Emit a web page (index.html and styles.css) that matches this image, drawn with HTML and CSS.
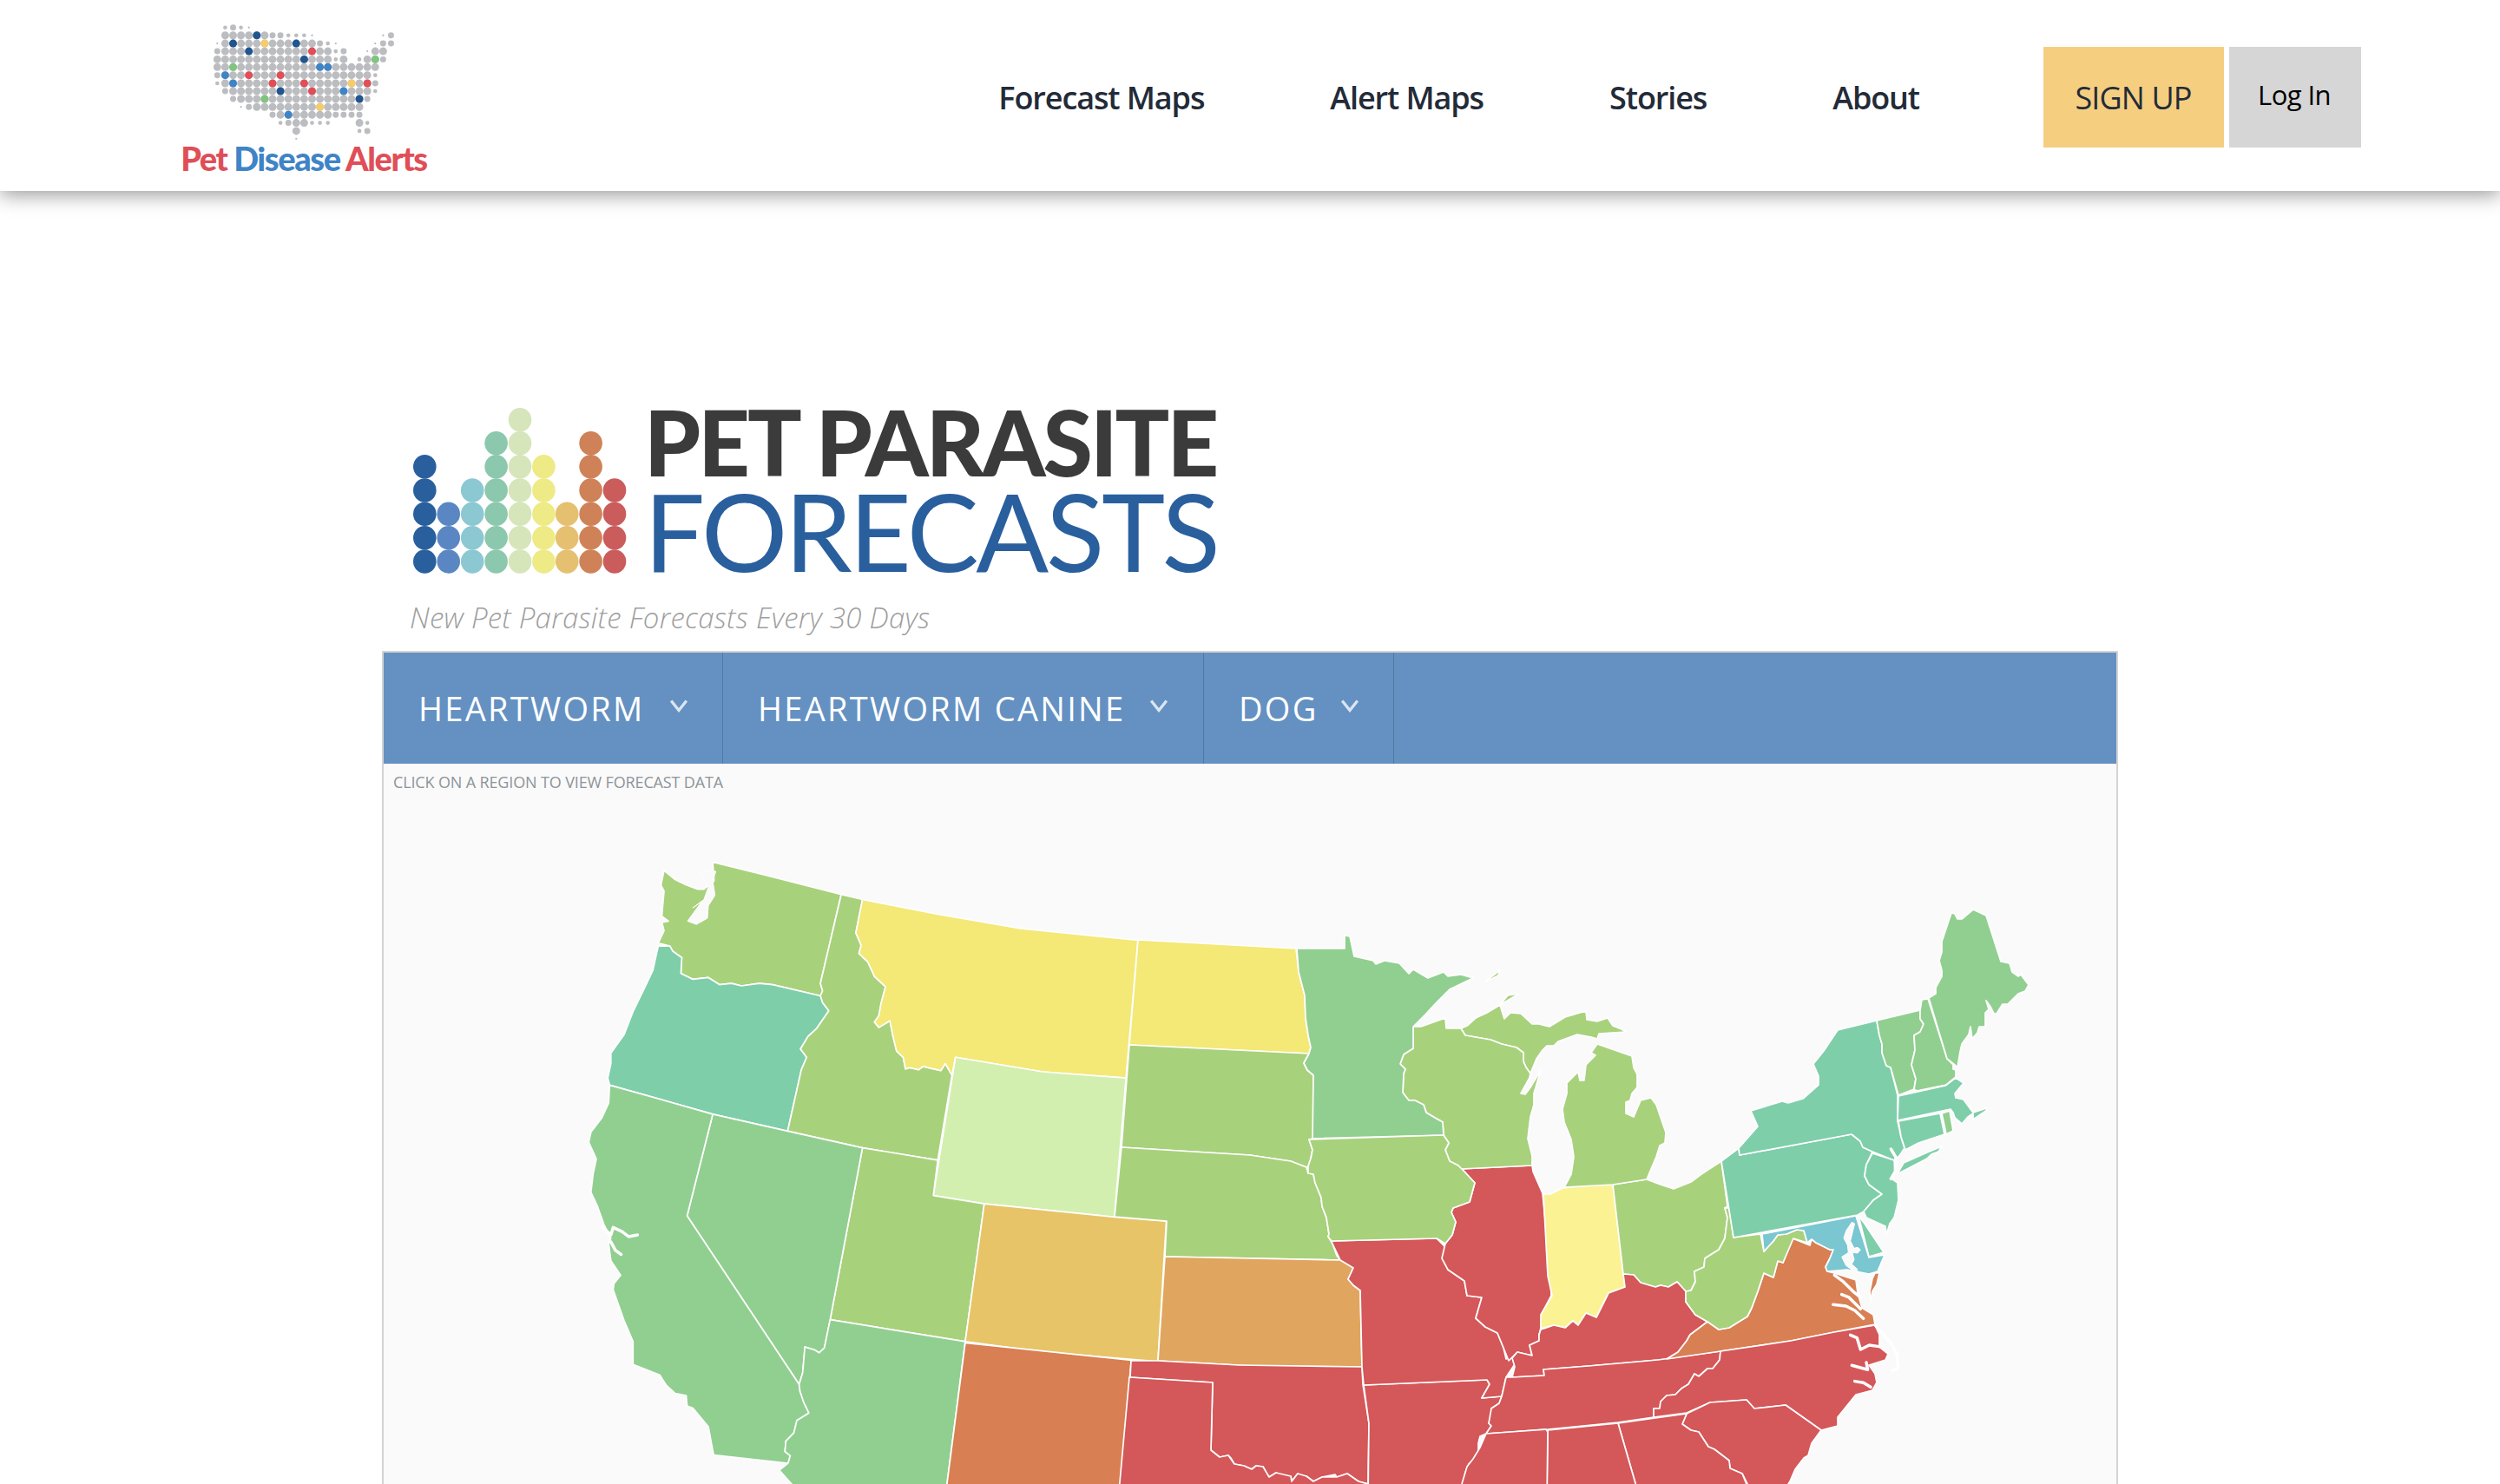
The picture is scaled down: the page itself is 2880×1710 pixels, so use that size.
FILE: index.html
```html
<!DOCTYPE html>
<html lang="en">
<head>
<meta charset="utf-8">
<title>Pet Parasite Forecasts</title>
<link rel="stylesheet" href="styles.css">
</head>
<body>
<div class="page">
<header class="site-header">
  <a class="brand">
    <svg class="brand-map" viewBox="200 80 628 405" aria-hidden="true">
      <g class="dots">
        <path class="s" d="M240.3 94h1M295 94h1"/><path class="m" d="M267.7 94h1"/><path class="t" d="M322.3 94h1"/>
        <path class="l" d="M240.3 121H378"/><path class="m" d="M404.3 121H433"/><path class="s" d="M459 121H515"/><path class="t" d="M541 121h1M787 121h1"/><path class="m" d="M814.3 121h1"/>
        <path class="t" d="M213 149h1M623 149h1M759.7 149h1"/><path class="l" d="M240.3 149H542"/><path class="m" d="M568.3 149h1M787 149H815.5"/><path class="s" d="M595.7 149h1"/>
        <path class="m" d="M213 176h1M650.3 176h1"/><path class="l" d="M240.3 176H597M759.7 176H788"/><path class="s" d="M623 176h1"/><path class="t" d="M732.3 176h1"/>
        <path class="l" d="M213 204H597M650.3 204h1M732.3 204H761"/><path class="s" d="M623 204h1M705 204h1"/><path class="m" d="M787 204h1"/>
        <path class="l" d="M213 231H761"/>
        <path class="m" d="M213 259h1"/><path class="l" d="M240.3 259H733.5"/><path class="s" d="M759.7 259h1"/>
        <path class="s" d="M213 287h1"/><path class="l" d="M240.3 287H733.5"/><path class="m" d="M759.7 287h1"/>
        <path class="m" d="M240.3 314h1"/><path class="l" d="M267.7 314H733.5"/><path class="s" d="M759.7 314h1"/>
        <path class="m" d="M267.7 341h1M732.3 341h1"/><path class="l" d="M295 341H706"/>
        <path class="t" d="M295 369h1"/><path class="m" d="M322.3 369h1"/><path class="l" d="M349.7 369H706"/>
        <path class="m" d="M404.3 396h1M623 396H706"/><path class="l" d="M431.7 396H597"/>
        <path class="s" d="M431.7 424h1M541 424H597M732.3 424h1"/><path class="m" d="M459 424h1"/><path class="l" d="M486.3 424H515M705 424h1"/>
        <path class="l" d="M486.3 452h1"/><path class="s" d="M705 452h1"/><path class="m" d="M732.3 452h1"/>
        <path class="t" d="M486.3 479h1"/>
      </g>
      <g class="pin-dark"><circle cx="349.7" cy="121" r="13.5"/><circle cx="267.7" cy="149" r="13.5"/><circle cx="486.3" cy="149" r="13.5"/><circle cx="322.3" cy="176" r="13.5"/><circle cx="513.7" cy="204" r="13.5"/><circle cx="431.7" cy="314" r="13.5"/><circle cx="705" cy="341" r="13.5"/></g>
      <g class="pin-yellow"><circle cx="377" cy="149" r="13.5"/><circle cx="677.7" cy="287" r="13.5"/><circle cx="568.3" cy="369" r="13.5"/></g>
      <g class="pin-red"><circle cx="541" cy="176" r="13.5"/><circle cx="322.3" cy="259" r="13.5"/><circle cx="431.7" cy="259" r="13.5"/><circle cx="404.3" cy="287" r="13.5"/><circle cx="513.7" cy="287" r="13.5"/><circle cx="732.3" cy="287" r="13.5"/><circle cx="541" cy="314" r="13.5"/></g>
      <g class="pin-blue"><circle cx="568.3" cy="231" r="13.5"/><circle cx="595.7" cy="231" r="13.5"/><circle cx="240.3" cy="259" r="13.5"/><circle cx="267.7" cy="287" r="13.5"/><circle cx="650.3" cy="314" r="13.5"/><circle cx="459" cy="396" r="13.5"/></g>
      <g class="pin-green"><circle cx="759.7" cy="204" r="13.5"/><circle cx="267.7" cy="231" r="13.5"/><circle cx="377" cy="341" r="13.5"/></g>
    </svg>
    <span class="brand-name"><span class="b-red">Pet</span> <span class="b-blue">Disease</span> <span class="b-red">Alerts</span></span>
  </a>
  <nav class="main-nav">
    <a>Forecast Maps</a>
    <a>Alert Maps</a>
    <a>Stories</a>
    <a>About</a>
  </nav>
  <div class="auth">
    <a class="btn-signup">SIGN UP</a>
    <a class="btn-login">Log In</a>
  </div>
</header>

<main class="content">
  <div class="hero">
    <svg class="hero-dots" viewBox="476 471 246 191" aria-hidden="true">
      <g class="col c1"><ellipse cx="489.3" cy="648" rx="13.3" ry="13.7"/><ellipse cx="489.3" cy="620.7" rx="13.3" ry="13.7"/><ellipse cx="489.3" cy="593.3" rx="13.3" ry="13.7"/><ellipse cx="489.3" cy="566" rx="13.3" ry="13.7"/><ellipse cx="489.3" cy="538.7" rx="13.3" ry="13.7"/></g>
      <g class="col c2"><ellipse cx="516.7" cy="648" rx="13.3" ry="13.7"/><ellipse cx="516.7" cy="620.7" rx="13.3" ry="13.7"/><ellipse cx="516.7" cy="593.3" rx="13.3" ry="13.7"/></g>
      <g class="col c3"><ellipse cx="544.2" cy="648" rx="13.3" ry="13.7"/><ellipse cx="544.2" cy="620.7" rx="13.3" ry="13.7"/><ellipse cx="544.2" cy="593.3" rx="13.3" ry="13.7"/><ellipse cx="544.2" cy="566" rx="13.3" ry="13.7"/></g>
      <g class="col c4"><ellipse cx="571.6" cy="648" rx="13.3" ry="13.7"/><ellipse cx="571.6" cy="620.7" rx="13.3" ry="13.7"/><ellipse cx="571.6" cy="593.3" rx="13.3" ry="13.7"/><ellipse cx="571.6" cy="566" rx="13.3" ry="13.7"/><ellipse cx="571.6" cy="538.7" rx="13.3" ry="13.7"/><ellipse cx="571.6" cy="511.7" rx="13.3" ry="13.7"/></g>
      <g class="col c5"><ellipse cx="599" cy="648" rx="13.3" ry="13.7"/><ellipse cx="599" cy="620.7" rx="13.3" ry="13.7"/><ellipse cx="599" cy="593.3" rx="13.3" ry="13.7"/><ellipse cx="599" cy="566" rx="13.3" ry="13.7"/><ellipse cx="599" cy="538.7" rx="13.3" ry="13.7"/><ellipse cx="599" cy="511.7" rx="13.3" ry="13.7"/><ellipse cx="599" cy="484.7" rx="13.3" ry="13.7"/></g>
      <g class="col c6"><ellipse cx="626.4" cy="648" rx="13.3" ry="13.7"/><ellipse cx="626.4" cy="620.7" rx="13.3" ry="13.7"/><ellipse cx="626.4" cy="593.3" rx="13.3" ry="13.7"/><ellipse cx="626.4" cy="566" rx="13.3" ry="13.7"/><ellipse cx="626.4" cy="538.7" rx="13.3" ry="13.7"/></g>
      <g class="col c7"><ellipse cx="653.2" cy="648" rx="13.3" ry="13.7"/><ellipse cx="653.2" cy="620.7" rx="13.3" ry="13.7"/><ellipse cx="653.2" cy="593.3" rx="13.3" ry="13.7"/></g>
      <g class="col c8"><ellipse cx="680.6" cy="648" rx="13.3" ry="13.7"/><ellipse cx="680.6" cy="620.7" rx="13.3" ry="13.7"/><ellipse cx="680.6" cy="593.3" rx="13.3" ry="13.7"/><ellipse cx="680.6" cy="566" rx="13.3" ry="13.7"/><ellipse cx="680.6" cy="538.7" rx="13.3" ry="13.7"/><ellipse cx="680.6" cy="511.7" rx="13.3" ry="13.7"/></g>
      <g class="col c9"><ellipse cx="708" cy="648" rx="13.3" ry="13.7"/><ellipse cx="708" cy="620.7" rx="13.3" ry="13.7"/><ellipse cx="708" cy="593.3" rx="13.3" ry="13.7"/><ellipse cx="708" cy="566" rx="13.3" ry="13.7"/></g>
    </svg>
    <h1 class="hero-title"><span class="ht-top">PET PARASITE</span><span class="ht-bottom">FORECASTS</span></h1>
  </div>
  <p class="tagline">New Pet Parasite Forecasts Every 30 Days</p>

  <section class="panel">
    <div class="toolbar">
      <button class="tool t-a">HEARTWORM<svg class="chev" viewBox="0 0 20 14"><polyline points="2,2 10,12 18,2"/></svg></button>
      <button class="tool t-b">HEARTWORM CANINE<svg class="chev" viewBox="0 0 20 14"><polyline points="2,2 10,12 18,2"/></svg></button>
      <button class="tool t-c">DOG<svg class="chev" viewBox="0 0 20 14"><polyline points="2,2 10,12 18,2"/></svg></button>
    </div>
    <p class="hint">CLICK ON A REGION TO VIEW FORECAST DATA</p>
    <svg class="us-map" viewBox="442 920 1996 790" aria-label="Forecast map of the United States">
      <g class="west" transform="matrix(.5102 0 0 .4783 640 960)">
        <polygon class="lime" points="355,70 470,100 645,148 598,362 603,380 598,392 490,365 460,362 420,368 397,362 370,365 345,348 310,352 283,338 285,300 265,285 258,272 232,265 245,235 240,215 255,212 240,200 242,175 245,140 238,125 245,90 270,112 295,125 320,135 335,135 358,115"/>
        <polygon class="water" points="325,95 340,90 362,92 355,115 360,150 345,175 343,205 318,220 298,212 330,165 310,180 335,160 345,130"/>
        <polygon class="teal" points="232,272 258,272 265,285 285,300 283,338 310,352 345,348 370,365 397,362 420,368 460,362 490,365 598,392 603,408 617,428 590,470 570,490 553,520 567,540 555,570 524,718 355,677 122,607 118,590 125,555 125,530 155,485 175,430 200,375 220,330 228,290"/>
        <polygon class="lime" points="645,148 693,160 678,240 690,270 685,290 705,310 720,345 745,370 735,410 730,440 720,455 730,468 755,452 762,490 770,525 785,540 790,568 800,565 820,570 830,562 870,572 880,555 895,583 863,788 693,758 524,718 555,570 567,540 553,520 570,490 590,470 617,428 603,408 598,392 603,380 598,362"/>
        <polygon class="yellow" points="693,160 860,195 1050,230 1315,258 1288,590 1100,575 903,540 895,583 880,555 870,572 830,562 820,570 800,565 790,568 785,540 770,525 762,490 755,452 730,468 720,455 730,440 735,410 745,370 720,345 705,310 685,290 690,270 678,240"/>
        <polygon class="pale" points="903,540 1100,575 1288,590 1262,925 968,893 853,873"/>
        <polygon class="lime" points="693,758 863,788 853,873 968,893 925,1225 620,1172"/>
        <polygon class="amber" points="968,893 1262,925 1379,935 1360,1273 1100,1250 925,1225"/>
        <polygon class="green" points="355,677 524,718 693,758 620,1172 607,1240 595,1252 585,1245 563,1238 558,1300 550,1328 297,922"/>
        <polygon class="green" points="122,607 355,677 297,922 550,1328 552,1345 560,1370 572,1397 545,1415 538,1445 520,1465 518,1490 530,1500 525,1518 357,1498 352,1470 345,1430 310,1385 297,1380 295,1355 270,1350 250,1330 235,1305 210,1295 175,1280 175,1225 155,1175 130,1100 132,1085 147,1065 125,1030 120,990 125,975 110,945 95,900 80,865 85,820 92,785 75,745 80,720 105,685 120,650"/>
        <polyline class="inlet" points="105,948 125,968 130,950 150,960 165,972 185,968"/>
        <polyline class="inlet" points="125,985 135,1005 148,1015"/>
        <polygon class="green" points="620,1172 925,1225 880,1600 560,1600 505,1535 525,1518 530,1500 518,1490 520,1465 538,1445 545,1415 572,1397 560,1370 552,1345 550,1328 558,1300 563,1238 585,1245 595,1252 607,1240"/>
        <polygon class="dkorange" points="925,1228 1300,1270 1296,1315 1275,1600 880,1600"/>
      </g>
      <g class="east">
        <polygon class="yellow" points="1311,1083 1493,1093 1496,1120 1503,1147 1504,1173 1507,1193 1510,1207 1508,1214 1301,1204"/>
        <polygon class="lime" points="1301,1204 1508,1214 1502,1225 1506,1233 1513,1239 1513,1312 1508,1313 1512,1325 1510,1335 1507,1344 1505,1345 1487,1338 1480,1337 1440,1331 1292,1322"/>
        <polygon class="lime" points="1292,1322 1440,1331 1480,1337 1487,1338 1505,1345 1507,1352 1513,1353 1515,1363 1522,1380 1523,1390 1528,1403 1531,1422 1530,1425 1535,1433 1540,1447 1544,1452 1342,1448 1344,1407 1284,1402"/>
        <polygon class="orange" points="1342,1448 1544,1452 1552,1456 1559,1461 1553,1474 1559,1481 1567,1487 1569,1575 1473,1575 1427,1573 1334,1568"/>
        <polygon class="red" points="1303,1568 1334,1568 1427,1573 1569,1575 1570,1595 1577,1640 1576,1710 1573,1709 1565,1707 1552,1698 1540,1702 1538,1699 1523,1702 1513,1707 1505,1701 1500,1703 1495,1698 1488,1707 1487,1701 1478,1703 1470,1697 1462,1702 1458,1696 1455,1690 1447,1689 1442,1693 1433,1689 1422,1687 1418,1680 1415,1677 1405,1679 1395,1671 1397,1593 1302,1587"/>
        <polygon class="red" points="1301,1587 1397,1593 1395,1671 1405,1679 1415,1677 1422,1687 1433,1689 1442,1693 1447,1689 1455,1690 1462,1702 1470,1697 1487,1701 1488,1707 1495,1698 1505,1701 1513,1707 1523,1702 1540,1702 1552,1698 1565,1707 1576,1710 1576,1730 1288,1730"/>
        <polygon class="red" points="1571,1596 1713,1590 1716,1595 1707,1611 1730,1609 1727,1617 1718,1623 1720,1631 1715,1640 1718,1643 1712,1652 1705,1655 1703,1663 1703,1677 1692,1687 1688,1697 1685,1710 1685,1730 1576,1730 1577,1640"/>
        <polygon class="red" points="1534,1430 1655,1427 1665,1437 1662,1450 1668,1463 1687,1476 1690,1493 1707,1495 1700,1519 1711,1529 1725,1536 1732,1553 1735,1566 1744,1560 1745,1572 1741,1578 1735,1587 1730,1609 1707,1611 1716,1595 1713,1590 1571,1596 1569,1575 1567,1487 1559,1481 1553,1474 1559,1461 1544,1452 1535,1433"/>
        <polygon class="red" points="1683,1347 1765,1343 1766,1350 1777,1375 1786,1467 1787,1493 1776,1514 1775,1530 1773,1538 1773,1545 1762,1550 1765,1562 1748,1558 1738,1568 1732,1553 1725,1536 1711,1529 1700,1519 1707,1495 1690,1493 1687,1476 1668,1463 1661,1450 1665,1433 1673,1423 1677,1408 1672,1397 1674,1392 1693,1385 1699,1363 1687,1350"/>
        <polygon class="cream" points="1778,1376 1786,1376 1800,1369 1858,1363 1869,1460 1872,1483 1853,1490 1839,1518 1827,1513 1818,1527 1812,1522 1803,1530 1790,1527 1775,1531 1775,1515 1788,1493 1783,1470"/>
        <polygon class="lime" points="1858,1365 1897,1359 1913,1365 1928,1370 1948,1362 1960,1353 1983,1338 1990,1390 1987,1392 1990,1403 1987,1427 1980,1440 1964,1450 1963,1460 1952,1465 1953,1477 1948,1487 1942,1488 1932,1477 1922,1483 1913,1481 1907,1483 1890,1478 1882,1469 1870,1468"/>
        <polygon class="lime" points="1897,1359 1858,1365 1802,1368 1810,1353 1813,1333 1810,1313 1802,1293 1800,1278 1805,1260 1805,1248 1818,1235 1820,1245 1825,1245 1827,1227 1838,1216 1833,1213 1840,1203 1860,1210 1880,1217 1882,1230 1886,1238 1886,1253 1880,1260 1878,1268 1873,1270 1873,1283 1882,1287 1890,1268 1902,1265 1908,1273 1919,1305 1918,1317 1912,1320 1908,1333 1902,1347"/>
        <polygon class="lime" points="1683,1185 1688,1193 1717,1198 1730,1203 1747,1207 1755,1213 1755,1223 1758,1230 1763,1237 1770,1220 1777,1210 1782,1205 1790,1205 1795,1200 1817,1192 1833,1195 1840,1197 1842,1191 1873,1189 1868,1186 1858,1182 1852,1173 1840,1177 1828,1175 1827,1165 1803,1172 1785,1183 1773,1180 1765,1180 1752,1168 1740,1167 1733,1174 1728,1158 1737,1147 1750,1145 1728,1158 1713,1167 1700,1173 1690,1182"/>
        <polygon class="lime" points="1712,1130 1728,1118 1726,1124 1712,1131"/>
        <polygon class="lime" points="1628,1183 1637,1183 1665,1173 1666,1185 1683,1185 1688,1193 1717,1198 1730,1203 1747,1207 1755,1213 1755,1223 1758,1230 1763,1237 1762,1242 1752,1260 1757,1261 1763,1253 1775,1233 1767,1260 1767,1273 1763,1287 1760,1312 1765,1332 1765,1343 1683,1347 1680,1343 1670,1338 1665,1325 1669,1317 1663,1308 1662,1293 1653,1288 1643,1282 1640,1273 1630,1268 1623,1268 1616,1259 1617,1237 1619,1232 1613,1226 1617,1215 1628,1208"/>
        <polygon class="green" points="1494,1093 1549,1093 1549,1078 1555,1079 1560,1102 1582,1107 1585,1111 1595,1107 1612,1110 1623,1122 1628,1117 1645,1127 1663,1120 1668,1125 1683,1123 1697,1127 1670,1140 1653,1157 1643,1168 1632,1179 1628,1183 1628,1208 1617,1215 1613,1226 1619,1232 1617,1237 1616,1259 1623,1268 1630,1268 1640,1273 1643,1282 1653,1288 1662,1293 1663,1308 1512,1312 1513,1239 1506,1233 1502,1225 1508,1214 1510,1207 1507,1193 1504,1173 1503,1147 1496,1120"/>
        <polygon class="lime" points="1508,1313 1663,1308 1669,1317 1665,1325 1670,1338 1680,1343 1687,1350 1699,1363 1693,1385 1674,1392 1672,1397 1677,1408 1673,1423 1665,1433 1655,1427 1534,1430 1530,1425 1531,1422 1528,1403 1523,1390 1522,1380 1515,1363 1513,1353 1507,1352 1507,1344 1510,1335 1512,1325"/>
        <polygon class="red" points="1775,1532 1790,1527 1803,1530 1812,1522 1818,1527 1827,1513 1839,1518 1853,1490 1872,1483 1870,1468 1882,1469 1890,1478 1907,1483 1913,1481 1922,1483 1932,1477 1942,1488 1942,1500 1953,1515 1967,1523 1947,1538 1943,1545 1933,1558 1920,1566 1910,1567 1830,1574 1778,1578 1779,1585 1742,1587 1745,1575 1742,1565 1748,1558 1765,1562 1762,1550 1773,1545 1773,1538"/>
        <polygon class="red" points="1712,1652 1718,1643 1715,1640 1718,1623 1727,1617 1730,1609 1735,1587 1742,1587 1779,1585 1778,1578 1830,1574 1910,1567 1982,1557 1981,1567 1973,1577 1967,1577 1957,1586 1952,1583 1945,1595 1937,1600 1930,1607 1920,1608 1913,1615 1912,1623 1905,1623 1905,1633 1864,1639 1783,1647 1740,1650"/>
        <polygon class="dkorange" points="1920,1566 1933,1558 1943,1545 1947,1538 1967,1523 1980,1532 1992,1530 2013,1517 2018,1507 2025,1488 2032,1467 2043,1472 2048,1453 2054,1455 2065,1427 2085,1435 2087,1428 2092,1432 2108,1440 2112,1440 2108,1450 2103,1460 2105,1465 2113,1467 2138,1475 2140,1490 2145,1507 2158,1515 2160,1526 2113,1535 2063,1545 1982,1557"/>
        <polygon class="dkorange" points="2160,1467 2165,1467 2162,1480 2157,1488 2155,1500 2154,1488 2157,1473"/>
        <polygon class="lime" points="1997,1426 2028,1422 2032,1442 2043,1430 2048,1423 2058,1422 2070,1417 2078,1418 2082,1432 2066,1427 2054,1455 2048,1453 2043,1472 2032,1467 2025,1488 2018,1507 2013,1517 1992,1530 1980,1532 1967,1523 1953,1515 1942,1500 1942,1488 1948,1487 1953,1477 1952,1465 1963,1460 1964,1450 1980,1440 1987,1427 1990,1403 1987,1392 1992,1392"/>
        <polygon class="blue" points="2030,1422 2138,1401 2153,1449 2171,1446 2163,1465 2153,1468 2128,1463 2105,1465 2103,1460 2108,1450 2112,1440 2108,1440 2092,1432 2087,1428 2082,1432 2078,1418 2070,1417 2058,1422 2048,1423 2043,1430 2032,1442"/>
        <polygon class="teal" points="2141,1401 2148,1410 2170,1443 2153,1448"/>
        <polygon class="teal" points="1983,1338 2003,1323 2004,1331 2133,1307 2143,1315 2146,1322 2157,1327 2150,1342 2148,1355 2153,1365 2168,1376 2158,1383 2147,1396 2140,1400 1997,1426"/>
        <polygon class="teal" points="2003,1323 2025,1298 2017,1280 2053,1269 2060,1271 2077,1266 2095,1250 2095,1240 2089,1226 2101,1211 2117,1187 2162,1176 2165,1193 2168,1203 2168,1213 2173,1228 2178,1230 2186,1262 2186,1292 2190,1310 2194,1323 2188,1332 2182,1337 2157,1327 2146,1322 2143,1315 2133,1307 2004,1331"/>
        <polygon class="teal" points="2186,1352 2193,1340 2220,1328 2237,1321 2233,1327 2225,1330 2220,1335 2197,1347 2187,1352"/>
        <polygon class="teal" points="2157,1329 2182,1337 2183,1350 2179,1358 2186,1363 2187,1383 2182,1403 2177,1410 2173,1423 2172,1413 2150,1403 2147,1396 2158,1383 2168,1376 2153,1365 2148,1355 2150,1342"/>
        <polygon class="teal" points="2187,1292 2235,1283 2240,1307 2210,1317 2195,1325 2190,1310"/>
        <polygon class="green" points="2237,1283 2246,1280 2250,1303 2242,1307"/>
        <polygon class="teal" points="2187,1263 2241,1251 2253,1242 2262,1248 2252,1260 2253,1265 2262,1267 2270,1278 2273,1282 2288,1277 2289,1279 2273,1290 2273,1283 2267,1287 2260,1295 2252,1288 2250,1282 2247,1278 2186,1291"/>
        <polygon class="green" points="2162,1176 2212,1164 2212,1174 2216,1180 2212,1189 2205,1193 2206,1210 2202,1227 2207,1243 2205,1255 2187,1262 2178,1230 2173,1228 2168,1213 2168,1203 2165,1193"/>
        <polygon class="green" points="2214,1152 2221,1151 2243,1220 2250,1227 2250,1232 2253,1233 2253,1241 2242,1250 2208,1257 2205,1255 2207,1243 2202,1227 2206,1210 2205,1193 2212,1189 2216,1180 2212,1174 2212,1164"/>
        <polygon class="green" points="2248,1052 2252,1053 2255,1059 2260,1059 2273,1048 2288,1055 2305,1108 2315,1110 2318,1120 2325,1125 2328,1123 2337,1135 2333,1142 2325,1145 2313,1157 2307,1157 2300,1168 2297,1168 2293,1160 2288,1153 2291,1163 2287,1167 2287,1183 2280,1183 2278,1190 2272,1197 2270,1183 2268,1192 2260,1203 2258,1212 2255,1230 2252,1227 2243,1220 2222,1150 2230,1145 2230,1138 2237,1125 2237,1118 2234,1107 2237,1097 2237,1085"/>
        <polygon class="red" points="1982,1557 2063,1545 2113,1535 2160,1527 2165,1538 2165,1552 2175,1560 2172,1567 2153,1573 2160,1583 2162,1593 2157,1602 2138,1607 2117,1633 2117,1643 2098,1648 2057,1619 2021,1623 2012,1613 1970,1616 1943,1628 1905,1633 1905,1623 1912,1623 1913,1615 1920,1608 1930,1607 1937,1600 1945,1595 1952,1583 1957,1586 1967,1577 1973,1577 1981,1567"/>
        <polygon class="red" points="1943,1629 1970,1616 2012,1613 2021,1623 2057,1619 2098,1648 2087,1663 2083,1677 2078,1680 2068,1693 2062,1707 2060,1710 2060,1730 2020,1730 2013,1710 2007,1698 1993,1692 1992,1683 1975,1670 1968,1667 1957,1650 1948,1648 1938,1641"/>
        <polygon class="red" points="1864,1640 1943,1629 1938,1641 1948,1648 1957,1650 1968,1667 1975,1670 1992,1683 1993,1692 2007,1698 2020,1730 1890,1730"/>
        <polygon class="red" points="1783,1648 1864,1640 1890,1730 1782,1730"/>
        <polygon class="red" points="1740,1650 1781,1647 1783,1650 1782,1730 1680,1730 1684,1710 1690,1690 1697,1681 1705,1668 1712,1652"/>
      </g>
      <g class="details" transform="translate(1980 1240) scale(.3333)">
        <polygon class="water" points="460,505 440,535 432,560 445,585 448,610 425,625 440,655 475,680 480,668 460,650 468,635 462,610 480,612 490,600 480,592 468,595 455,570 465,530 470,510"/>
        <polyline class="inlet" points="400,688 430,710 465,745 490,765"/>
        <polyline class="inlet" points="425,755 450,765 490,805"/>
        <polyline class="inlet" points="395,790 440,795 470,810 500,838"/>
        <polyline class="inlet" points="455,895 478,905 490,945 520,930 555,935"/>
        <polyline class="inlet" points="460,1000 515,1015 510,990"/>
        <polyline class="inlet" points="470,1055 500,1060 525,1075"/>
        <polyline class="inlet" points="540,860 600,930 615,960 620,1010 600,1018"/>
        <polyline class="inlet" points="595,252 612,280 610,330 595,355"/>
      </g>
    </svg>
  </section>
</main>
</div>
</body>
</html>
```
FILE: styles.css
```css
* { box-sizing: border-box; }
html, body { margin: 0; padding: 0; background: #fff; }
body { font-family: "Open Sans", "Noto Sans", sans-serif; }
.page { height: 1710px; overflow: hidden; position: relative; }

.site-header {
  height: 220px;
  display: flex;
  align-items: flex-start;
  padding: 0 160px 0 206px;
  background: #fff;
  box-shadow: 0 4px 22px rgba(0, 0, 0, .42);
  position: relative;
  z-index: 2;
}
.brand { display: flex; flex-direction: column; align-items: center; width: 288px; padding-top: 27px; }
.brand-map { width: 209px; height: 135px; display: block; }
.brand-name { font-family: Lato, sans-serif; font-weight: 900; font-size: 38px; line-height: 40px; letter-spacing: -1.4px; white-space: nowrap; }
.b-red { color: #e04e57; }
.b-blue { color: #3f84c6; }
.dots path { fill: none; stroke: #bcbdc1; stroke-linecap: round; stroke-dasharray: 0 27.33; }
.dots .l { stroke-width: 27px; }
.dots .m { stroke-width: 21px; }
.dots .s { stroke-width: 14px; }
.dots .t { stroke-width: 7px; }
.pin-dark { fill: #20558f; }
.pin-yellow { fill: #f6cb6a; }
.pin-red { fill: #e04e57; }
.pin-blue { fill: #3f84c6; }
.pin-green { fill: #7fc47f; }

.main-nav {
  margin-left: auto;
  margin-right: 143px;
  margin-top: 54px;
  height: 116px;
  display: flex;
  align-items: center;
  gap: 145px;
  font-weight: 600;
  font-size: 36px;
  letter-spacing: -1.1px;
  color: #232b38;
}
.auth { display: flex; gap: 6px; margin-top: 54px; }
.btn-signup { width: 208px; height: 116px; background: #f5ce80; color: #232b38; font-size: 36px; letter-spacing: -.9px; display: flex; align-items: center; justify-content: center; padding-right: 1px; }
.btn-login { width: 152px; height: 116px; background: #d6d6d6; color: #000; font-size: 31px; letter-spacing: -.6px; display: flex; align-items: center; justify-content: center; padding-bottom: 6px; padding-right: 2px; }

.content { width: 2000px; margin: 0 auto; }
.hero { display: flex; gap: 20px; padding: 250px 0 0 36px; align-items: flex-start; }
.hero-dots { width: 246px; height: 191px; display: block; }
.c1 { fill: #2a5f9e; } .c2 { fill: #5a87c3; } .c3 { fill: #8cc8d2; }
.c4 { fill: #8cc8ae; } .c5 { fill: #d6e5ba; } .c6 { fill: #eeea85; }
.c7 { fill: #e4c070; } .c8 { fill: #cf8258; } .c9 { fill: #cb5c5c; }
.hero-title { margin: 0; font-family: Lato, sans-serif; display: flex; flex-direction: column; }
.ht-top { font-weight: 900; font-size: 104px; line-height: 78px; letter-spacing: -2.9px; color: #3b3b3b; white-space: nowrap; }
.ht-bottom { font-weight: 400; font-size: 124px; line-height: 126px; letter-spacing: -3.3px; color: #2a5f9e; white-space: nowrap; }
.tagline { margin: 18px 0 0 32px; font-size: 33px; line-height: 40px; font-style: italic; font-weight: 300; letter-spacing: .25px; color: #9e9e9e; }

.panel { margin-top: 18px; border: 2px solid #d4d4d4; background: #fafafa; height: 1100px; }
.toolbar { height: 128px; background: #6491c2; display: flex; }
.tool { font-family: inherit; font-weight: 500; border: 0; border-right: 1px solid #4d79a5; background: transparent; color: #fff; font-size: 38px; letter-spacing: 2.3px; padding: 0 0 0 40px; display: flex; align-items: center; gap: 28px; height: 100%; }
.t-a { width: 391px; }
.t-b { width: 554px; }
.t-c { width: 219px; }
.t-c .chev { margin-left: -3px; }
.chev { width: 22px; height: 16px; fill: none; stroke: #dbe5f2; stroke-width: 3px; margin-top: -6px; }
.hint { margin: 0; padding: 11px 0 0 11px; height: 40px; font-size: 18px; line-height: 20px; letter-spacing: -.14px; color: #8d9499; }
.us-map { width: 1996px; height: 790px; display: block; }
.us-map polygon { stroke: #fff; stroke-width: 1.7px; stroke-linejoin: round; vector-effect: non-scaling-stroke; }
.inlet { fill: none; stroke: #fff; stroke-width: 3.5px; stroke-linejoin: round; stroke-linecap: round; vector-effect: non-scaling-stroke; }
.us-map .water { fill: #fafafa; stroke-width: 1px; }
.red { fill: #d45759; }
.lime { fill: #a8d17c; }
.teal { fill: #7ecea9; }
.green { fill: #91cf90; }
.yellow { fill: #f4e876; }
.cream { fill: #fbf294; }
.pale { fill: #d2efaf; }
.amber { fill: #e7c468; }
.orange { fill: #e0a55f; }
.dkorange { fill: #d87f53; }
.blue { fill: #7ac6d1; }
```
